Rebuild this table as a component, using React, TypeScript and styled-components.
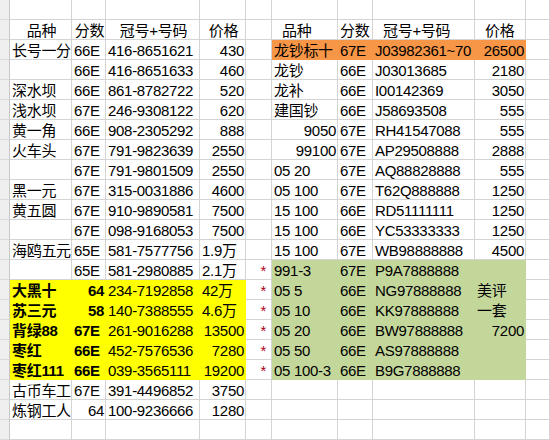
import React from 'react';
import styled, { createGlobalStyle } from 'styled-components';

const GlobalStyle = createGlobalStyle`
  html, body { margin: 0; padding: 0; background: #ffffff; }
  body {
    font-family: "Liberation Sans", "Noto Sans CJK SC", sans-serif;
    font-size: 15px;
    color: #000;
  }
`;

const GRID = '#d4d4d4';
const COLS = '10px 62px 34px 94px 46px 26px 66px 35px 102px 51px 24px';

const Sheet = styled.div`
  display: flex;
  flex-direction: column;
  width: 550px;
  height: 440px;
  overflow: hidden;
`;

const Row = styled.div`
  display: grid;
  grid-template-columns: ${COLS};
  height: 20px;
`;

const Gutter = styled.div`
  box-sizing: border-box;
  height: 20px;
  background: #efefef;
  border-right: 1px solid #c6c6c6;
  border-bottom: 1px solid #d9d9d9;
`;

type Align = 'l' | 'r' | 'c';

const Cell = styled.div<{ $align: Align; $bold?: boolean; $fill?: string; $pad?: number }>`
  box-sizing: border-box;
  height: 20px;
  padding: 2px ${(p) => (p.$align === 'r' ? 1 : 0)}px 0 ${(p) => (p.$pad ?? 2)}px;
  line-height: 17px;
  white-space: nowrap;
  letter-spacing: -0.3px;
  text-align: ${(p) => (p.$align === 'r' ? 'right' : p.$align === 'c' ? 'center' : 'left')};
  font-weight: ${(p) => (p.$bold ? 700 : 400)};
  color: #000;
  background: ${(p) => p.$fill ?? 'transparent'};
  border-right: 1px solid ${(p) => p.$fill ?? GRID};
  border-bottom: 1px solid ${(p) => p.$fill ?? GRID};
`;

const Star = styled(Cell)`
  padding-right: 5px;
  color: #b00020;
`;

type Spec = string | { t: string; a?: Align; p?: number };

interface RowData {
  left: Spec[];
  right: Spec[];
  star?: boolean;
  leftFill?: string;
  rightFill?: string;
  bold?: boolean;
}

const ORANGE = '#f79646';
const GREEN = '#c4d79b';
const YELLOW = '#ffff00';

const E = ['', '', '', ''];

const rows: RowData[] = [
  { left: E, right: E },
  {
    left: [
      { t: '品种', a: 'c' },
      { t: '分数', a: 'c' },
      { t: '冠号+号码', a: 'c' },
      { t: '价格', a: 'c' },
    ],
    right: [
      { t: '品种', a: 'l', p: 10 },
      { t: '分数', a: 'l', p: 2 },
      { t: '冠号+号码', a: 'l', p: 10 },
      { t: '价格', a: 'l', p: 10 },
    ],
  },
  { left: ['长号一分', '66E', '416-8651621', '430'], right: ['龙钞标十', '67E', 'J03982361~70', '26500'], rightFill: ORANGE },
  { left: ['', '66E', '416-8651633', '460'], right: ['龙钞', '66E', 'J03013685', '2180'] },
  { left: ['深水坝', '66E', '861-8782722', '520'], right: ['龙补', '66E', 'I00142369', '3050'] },
  { left: ['浅水坝', '67E', '246-9308122', '620'], right: ['建国钞', '66E', 'J58693508', '555'] },
  { left: ['黄一角', '66E', '908-2305292', '888'], right: ['9050', '67E', 'RH41547088', '555'] },
  { left: ['火车头', '67E', '791-9823639', '2550'], right: ['99100', '67E', 'AP29508888', '2888'] },
  { left: ['', '67E', '791-9801509', '2550'], right: ['05 20', '67E', 'AQ88828888', '555'] },
  { left: ['黑一元', '67E', '315-0031886', '4600'], right: ['05 100', '67E', 'T62Q888888', '1250'] },
  { left: ['黄五圆', '67E', '910-9890581', '7500'], right: ['15 100', '66E', 'RD51111111', '1250'] },
  { left: ['', '67E', '098-9168053', '7500'], right: ['15 100', '66E', 'YC53333333', '1250'] },
  { left: ['海鸥五元', '65E', '581-7577756', '1.9万'], right: ['15 100', '67E', 'WB98888888', '4500'] },
  { left: ['', '65E', '581-2980885', '2.1万'], right: ['991-3', '67E', 'P9A7888888', ''], star: true, rightFill: GREEN },
  { left: ['大黑十', '64', '234-7192858', '42万'], right: ['05 5', '66E', 'NG97888888', '美评'], star: true, rightFill: GREEN, leftFill: YELLOW, bold: true },
  { left: ['苏三元', '58', '140-7388555', '4.6万'], right: ['05 10', '66E', 'KK97888888', '一套'], star: true, rightFill: GREEN, leftFill: YELLOW, bold: true },
  { left: ['背绿88', '67E', '261-9016288', '13500'], right: ['05 20', '66E', 'BW97888888', '7200'], star: true, rightFill: GREEN, leftFill: YELLOW, bold: true },
  { left: ['枣红', '66E', '452-7576536', '7280'], right: ['05 50', '66E', 'AS97888888', ''], star: true, rightFill: GREEN, leftFill: YELLOW, bold: true },
  { left: ['枣红111', '66E', '039-3565111', '19200'], right: ['05 100-3', '66E', 'B9G7888888', ''], star: true, rightFill: GREEN, leftFill: YELLOW, bold: true },
  { left: ['古币车工', '67E', '391-4496852', '3750'], right: E },
  { left: ['炼钢工人', '64', '100-9236666', '1280'], right: E },
  { left: E, right: E },
];

const norm = (s: Spec): { t: string; a: Align; p?: number } => {
  if (typeof s === 'string') return { t: s, a: /^\d+$/.test(s) ? 'r' : 'l' };
  return { t: s.t, a: s.a ?? 'l', p: s.p };
};

const renderCells = (specs: Spec[], fill?: string, boldFirstTwo?: boolean, keyBase = '') =>
  specs.map((s, i) => {
    const c = norm(s);
    return (
      <Cell key={keyBase + i} $align={c.a} $pad={c.p} $fill={fill} $bold={boldFirstTwo && i < 2}>
        {c.t}
      </Cell>
    );
  });

export default function App() {
  return (
    <>
      <GlobalStyle />
      <Sheet>
        {rows.map((r, idx) => (
          <Row key={idx}>
            <Gutter />
            {renderCells(r.left, r.leftFill, r.bold, 'l')}
            <Star $align="r">{r.star ? '*' : ''}</Star>
            {renderCells(r.right, r.rightFill, false, 'r')}
            <Cell $align="l" />
          </Row>
        ))}
      </Sheet>
    </>
  );
}
